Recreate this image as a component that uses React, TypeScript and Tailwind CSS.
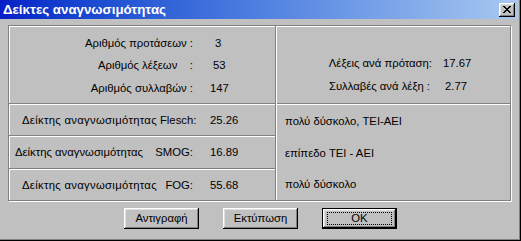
import React from "react";

const CloseGlyph = () => {
  const rows = ["11000011", "01100110", "00111100", "00011000", "00111100", "01100110", "11000011"];
  const rects: React.ReactElement[] = [];
  rows.forEach((r, y) =>
    r.split("").forEach((c, x) => {
      if (c === "1") rects.push(<rect key={`${x}-${y}`} x={x} y={y} width={1} height={1} fill="#000" />);
    })
  );
  return (
    <svg width="8" height="7" viewBox="0 0 8 7" shapeRendering="crispEdges">
      {rects}
    </svg>
  );
};

const HLine = () => <div className="h-[2px] border-t border-b border-t-[#808080] border-b-white shrink-0" />;

const Btn = ({ label, isDefault }: { label: string; isDefault?: boolean }) =>
  isDefault ? (
    <div className="w-[75px] h-[21px] border border-black">
      <div className="w-full h-full flex items-center justify-center shadow-[inset_-1px_-1px_0_#000,inset_1px_1px_0_#fff,inset_-2px_-2px_0_#808080,inset_2px_2px_0_#dfdfdf]">
        <div className="w-[65px] h-[13px] border border-dotted border-black flex items-center justify-center leading-none">
          {label}
        </div>
      </div>
    </div>
  ) : (
    <div className="w-[75px] h-[21px] flex items-center justify-center shadow-[inset_-1px_-1px_0_#000,inset_1px_1px_0_#fff,inset_-2px_-2px_0_#808080,inset_2px_2px_0_#dfdfdf]">
      {label}
    </div>
  );

export default function App() {
  return (
    <div className="w-[521px] h-[241px] bg-[#c0c0c0] border-r border-b border-black font-['Liberation_Sans',Arial,sans-serif] text-[11.3px] text-black whitespace-nowrap">
      <div className="w-[520px] h-[240px] border-r border-b border-[#808080] flex flex-col">
        <div className="w-[517px] h-[19px] shrink-0 bg-gradient-to-r from-[#0a1ec8] to-[#a8c8f0] flex items-center justify-between pl-[3px] pr-[2px]">
          <span className="text-white font-bold text-[13.3px] leading-none">Δείκτες αναγνωσιμότητας</span>
          <div className="w-[16px] h-[14px] bg-[#c0c0c0] flex items-center justify-center shadow-[inset_-1px_-1px_0_#000,inset_1px_1px_0_#fff,inset_-2px_-2px_0_#808080,inset_2px_2px_0_#dfdfdf]">
            <CloseGlyph />
          </div>
        </div>

        <div className="ml-[8px] mt-[6px] w-[503px] h-[176px] shrink-0 border border-[#808080] shadow-[inset_1px_1px_0_#fff,1px_1px_0_#fff] flex">
          {/* left column */}
          <div className="w-[266px] flex flex-col">
            <div className="h-[77px] pt-[6px] flex flex-col">
              <div className="h-[22px] flex items-center">
                <span className="w-[184px] text-right whitespace-pre">Αριθμός προτάσεων :</span>
                <span className="ml-[22px]">3</span>
              </div>
              <div className="h-[23px] flex items-center">
                <span className="w-[184px] text-right whitespace-pre">Αριθμός λέξεων    :</span>
                <span className="ml-[20px]">53</span>
              </div>
              <div className="h-[22px] flex items-center">
                <span className="w-[184px] text-right whitespace-pre">Αριθμός συλλαβών :</span>
                <span className="ml-[17px]">147</span>
              </div>
            </div>
            <HLine />
            <div className="h-[30px] flex items-center">
              <div className="ml-[13px] w-[171px] flex justify-between gap-[3px]">
                <span className="tracking-[0.3px]">Δείκτης αναγνωσιμότητας</span>
                <span>Flesch:</span>
              </div>
              <span className="ml-[17px]">25.26</span>
            </div>
            <HLine />
            <div className="h-[31px] flex items-center">
              <div className="ml-[6px] w-[178px] flex justify-between">
                <span>Δείκτης αναγνωσιμότητας</span>
                <span>SMOG:</span>
              </div>
              <span className="ml-[17px]">16.89</span>
            </div>
            <HLine />
            <div className="h-[30px] flex items-center">
              <div className="ml-[13px] w-[171px] flex justify-between">
                <span className="tracking-[0.3px]">Δείκτης αναγνωσιμότητας</span>
                <span>FOG:</span>
              </div>
              <span className="ml-[17px]">55.68</span>
            </div>
          </div>

          <div className="w-[2px] border-l border-r border-l-[#808080] border-r-white shrink-0" />

          {/* right column */}
          <div className="flex-1 flex flex-col">
            <div className="h-[77px] pt-[26px] flex flex-col">
              <div className="h-[22px] flex items-center">
                <span className="w-[155px] text-right whitespace-pre">Λέξεις ανά πρόταση:</span>
                <span className="ml-[11px]">17.67</span>
              </div>
              <div className="h-[24px] flex items-center">
                <span className="w-[153px] text-right whitespace-pre">Συλλαβές ανά λέξη :</span>
                <span className="ml-[15px]">2.77</span>
              </div>
            </div>
            <HLine />
            <div className="flex flex-col pl-[8px]">
              <div className="h-[32px] flex items-center">πολύ δύσκολο, TEI-AEI</div>
              <div className="h-[32px] flex items-center">επίπεδο TEI - AEI</div>
              <div className="h-[30px] flex items-center">πολύ δύσκολο</div>
            </div>
          </div>
        </div>

        <div className="mt-[7px] ml-[124px] flex gap-[24px]">
          <Btn label="Αντιγραφή" />
          <Btn label="Εκτύπωση" />
          <Btn label="OK" isDefault />
        </div>
      </div>
    </div>
  );
}
